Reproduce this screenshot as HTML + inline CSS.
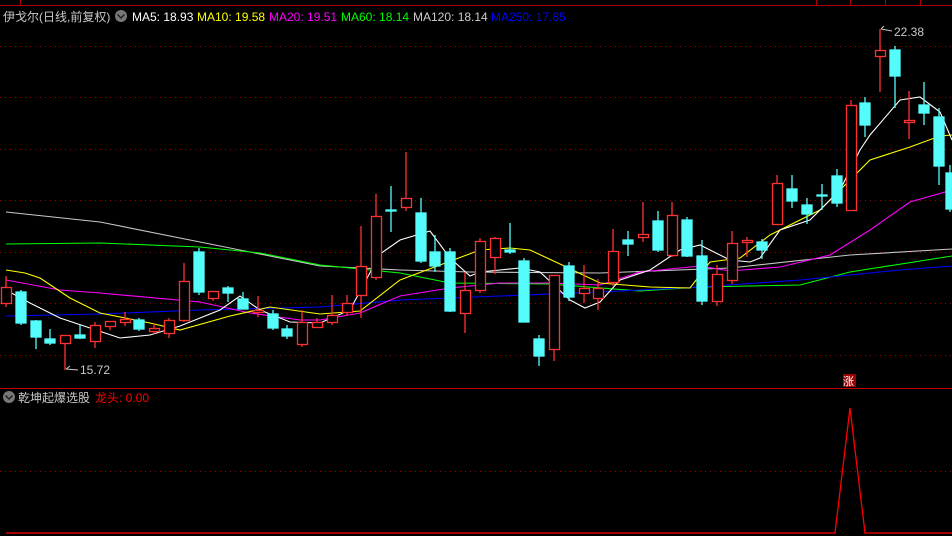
<!DOCTYPE html>
<html><head><meta charset="utf-8"><style>
html,body{margin:0;padding:0;background:#000;width:952px;height:536px;overflow:hidden}
svg{display:block}
text{font-family:"Liberation Sans","Noto Sans CJK SC",sans-serif;font-size:12px}
</style></head><body>
<svg width="952" height="536" viewBox="0 0 952 536" xmlns="http://www.w3.org/2000/svg">
<rect width="952" height="536" fill="#000"/>
<line x1="0" y1="5.5" x2="952" y2="5.5" stroke="#b00000"/>
<line x1="20.5" y1="0" x2="20.5" y2="5" stroke="#b00000"/>
<g stroke="#b00000"><line x1="816.5" y1="0" x2="816.5" y2="5"/><line x1="850.5" y1="0" x2="850.5" y2="5"/><line x1="885.5" y1="0" x2="885.5" y2="5"/><line x1="920.5" y1="0" x2="920.5" y2="5"/></g>
<g stroke="#900" stroke-dasharray="1 4">
<line x1="0" y1="46.5" x2="952" y2="46.5"/><line x1="0" y1="97.5" x2="952" y2="97.5"/><line x1="0" y1="149.5" x2="952" y2="149.5"/><line x1="0" y1="200.5" x2="952" y2="200.5"/><line x1="0" y1="252.5" x2="952" y2="252.5"/><line x1="0" y1="303.5" x2="952" y2="303.5"/><line x1="0" y1="355.5" x2="952" y2="355.5"/><line x1="0" y1="471.5" x2="952" y2="471.5"/>
</g>
<line x1="0" y1="388.5" x2="952" y2="388.5" stroke="#c00000"/>
<text x="3" y="21" fill="#c8c8c8">伊戈尔(日线,前复权)</text>
<circle cx="121" cy="16" r="6" fill="#777"/><path d="M117.5 14.5 L121 18 L124.5 14.5" stroke="#222" stroke-width="1.5" fill="none"/>
<text x="132" y="21" fill="#fff">MA5: 18.93</text>
<text x="197" y="21" fill="#ff0">MA10: 19.58</text>
<text x="269" y="21" fill="#f0f">MA20: 19.51</text>
<text x="341" y="21" fill="#0f0">MA60: 18.14</text>
<text x="413" y="21" fill="#ccc">MA120: 18.14</text>
<text x="491" y="21" fill="#00f">MA250: 17.85</text>
<g fill="none" stroke-width="1.1">
<polyline stroke="#c8c8c8" points="6,212 100,222 200,242 320,266 400,270 470,272 600,273 730,268 850,255 952,249"/>
<polyline stroke="#0f0" points="6,244 100,243 200,247 260,253 320,265 400,273 450,283 550,284 640,291 700,287 800,285 850,272 952,256"/>
<polyline stroke="#00f" points="6,316 100,314 200,310 320,307 400,300 500,296 600,292 700,287 800,280 900,270 952,266"/>
<polyline stroke="#f0f" points="6,280 60,290 100,293 200,302 250,313 300,320 320,320 360,313 400,296 450,288 500,283 550,283 600,285 640,272 700,266 730,271 780,267 830,255 870,230 910,202 952,190"/>
<polyline stroke="#ff0" points="6,270 25,273 40,278 70,298 100,313 150,323 180,330 230,316 270,307 320,314 360,311 400,280 440,265 480,250 510,248 530,250 560,264 600,283 650,287 690,288 710,262 740,258 770,235 820,210 870,160 910,147 940,136 952,135"/>
<polyline stroke="#fff" points="6,290 30,303 60,318 90,328 120,338 150,335 180,326 220,310 240,296 260,310 290,322 320,323 350,310 380,254 400,240 430,231 450,258 470,276 480,272 500,270 520,268 540,272 570,300 585,308 600,302 620,280 650,270 680,250 700,245 730,260 750,262 760,258 780,230 810,220 840,190 860,150 870,135 900,100 920,97 940,112 952,140"/>
</g>
<g stroke="#ff3232" fill="#000" stroke-width="1.3">
<line x1="6" y1="276" x2="6" y2="307"/><rect x="1.5" y="287.5" width="10" height="16"/>
<line x1="65" y1="335" x2="65" y2="370"/><rect x="60.5" y="335.5" width="10" height="8"/>
<line x1="95" y1="322" x2="95" y2="348"/><rect x="90.5" y="325.5" width="10" height="16"/>
<line x1="110" y1="321" x2="110" y2="330"/><rect x="105.5" y="321.5" width="10" height="5"/>
<line x1="125" y1="312" x2="125" y2="326"/><rect x="120.5" y="319.5" width="10" height="3"/>
<line x1="154" y1="323" x2="154" y2="334"/><rect x="149.5" y="328.5" width="10" height="3"/>
<line x1="169" y1="318" x2="169" y2="338"/><rect x="164.5" y="320.5" width="10" height="13"/>
<line x1="184" y1="263" x2="184" y2="322"/><rect x="179.5" y="281.5" width="10" height="39"/>
<line x1="213" y1="291" x2="213" y2="301"/><rect x="208.5" y="291.5" width="10" height="7"/>
<line x1="258" y1="296" x2="258" y2="317"/><rect x="253.5" y="310.5" width="10" height="2"/>
<line x1="302" y1="310" x2="302" y2="347"/><rect x="297.5" y="322.5" width="10" height="22"/>
<line x1="317" y1="318" x2="317" y2="328"/><rect x="312.5" y="322.5" width="10" height="5"/>
<line x1="332" y1="295" x2="332" y2="325"/><rect x="327.5" y="315.5" width="10" height="7"/>
<line x1="347" y1="295" x2="347" y2="316"/><rect x="342.5" y="303.5" width="10" height="9"/>
<line x1="361" y1="226" x2="361" y2="318"/><rect x="356.5" y="266.5" width="10" height="29"/>
<line x1="376" y1="194" x2="376" y2="280"/><rect x="371.5" y="216.5" width="10" height="61"/>
<line x1="406" y1="152" x2="406" y2="211"/><rect x="401.5" y="198.5" width="10" height="9"/>
<line x1="465" y1="272" x2="465" y2="333"/><rect x="460.5" y="290.5" width="10" height="23"/>
<line x1="480" y1="238" x2="480" y2="293"/><rect x="475.5" y="241.5" width="10" height="49"/>
<line x1="495" y1="237" x2="495" y2="274"/><rect x="490.5" y="238.5" width="10" height="19"/>
<line x1="554" y1="275" x2="554" y2="361"/><rect x="549.5" y="275.5" width="10" height="74"/>
<line x1="584" y1="265" x2="584" y2="303"/><rect x="579.5" y="288.5" width="10" height="5"/>
<line x1="598" y1="279" x2="598" y2="310"/><rect x="593.5" y="288.5" width="10" height="10"/>
<line x1="613" y1="229" x2="613" y2="286"/><rect x="608.5" y="251.5" width="10" height="31"/>
<line x1="643" y1="202" x2="643" y2="242"/><rect x="638.5" y="234.5" width="10" height="3"/>
<line x1="672" y1="202" x2="672" y2="257"/><rect x="667.5" y="215.5" width="10" height="40"/>
<line x1="717" y1="265" x2="717" y2="306"/><rect x="712.5" y="274.5" width="10" height="27"/>
<line x1="732" y1="231" x2="732" y2="284"/><rect x="727.5" y="243.5" width="10" height="37"/>
<line x1="747" y1="237" x2="747" y2="257"/><rect x="742.5" y="240.5" width="10" height="2"/>
<line x1="777" y1="175" x2="777" y2="224"/><rect x="772.5" y="183.5" width="10" height="41"/>
<line x1="851" y1="100" x2="851" y2="210"/><rect x="846.5" y="105.5" width="10" height="105"/>
<line x1="880" y1="29" x2="880" y2="92"/><rect x="875.5" y="50.5" width="10" height="6"/>
<line x1="909" y1="91" x2="909" y2="139"/><rect x="904.5" y="120.5" width="10" height="2"/>
</g>
<g stroke="#54fcfc" fill="#54fcfc" stroke-width="1.3">
<line x1="21" y1="290" x2="21" y2="325"/><rect x="16" y="292" width="10" height="31"/>
<line x1="36" y1="320" x2="36" y2="349"/><rect x="31" y="321" width="10" height="16"/>
<line x1="50" y1="329" x2="50" y2="345"/><rect x="45" y="339" width="10" height="4"/>
<line x1="80" y1="325" x2="80" y2="339"/><rect x="75" y="335" width="10" height="3"/>
<line x1="139" y1="318" x2="139" y2="331"/><rect x="134" y="320" width="10" height="9"/>
<line x1="199" y1="248" x2="199" y2="295"/><rect x="194" y="252" width="10" height="40"/>
<line x1="228" y1="286" x2="228" y2="302"/><rect x="223" y="288" width="10" height="5"/>
<line x1="243" y1="292" x2="243" y2="309"/><rect x="238" y="299" width="10" height="10"/>
<line x1="273" y1="310" x2="273" y2="330"/><rect x="268" y="314" width="10" height="14"/>
<line x1="287" y1="325" x2="287" y2="339"/><rect x="282" y="329" width="10" height="7"/>
<line x1="391" y1="186" x2="391" y2="232"/><rect x="386" y="210" width="10" height="1"/>
<line x1="421" y1="198" x2="421" y2="263"/><rect x="416" y="213" width="10" height="48"/>
<line x1="435" y1="235" x2="435" y2="272"/><rect x="430" y="252" width="10" height="14"/>
<line x1="450" y1="248" x2="450" y2="312"/><rect x="445" y="252" width="10" height="59"/>
<line x1="510" y1="223" x2="510" y2="254"/><rect x="505" y="250" width="10" height="2"/>
<line x1="524" y1="258" x2="524" y2="322"/><rect x="519" y="261" width="10" height="61"/>
<line x1="539" y1="335" x2="539" y2="366"/><rect x="534" y="339" width="10" height="17"/>
<line x1="569" y1="262" x2="569" y2="301"/><rect x="564" y="266" width="10" height="31"/>
<line x1="628" y1="231" x2="628" y2="256"/><rect x="623" y="240" width="10" height="4"/>
<line x1="658" y1="211" x2="658" y2="252"/><rect x="653" y="221" width="10" height="29"/>
<line x1="687" y1="217" x2="687" y2="257"/><rect x="682" y="220" width="10" height="36"/>
<line x1="702" y1="240" x2="702" y2="305"/><rect x="697" y="256" width="10" height="45"/>
<line x1="762" y1="239" x2="762" y2="259"/><rect x="757" y="242" width="10" height="8"/>
<line x1="792" y1="175" x2="792" y2="208"/><rect x="787" y="189" width="10" height="12"/>
<line x1="807" y1="198" x2="807" y2="224"/><rect x="802" y="205" width="10" height="9"/>
<line x1="822" y1="184" x2="822" y2="210"/><rect x="817" y="195" width="10" height="1"/>
<line x1="837" y1="169" x2="837" y2="207"/><rect x="832" y="176" width="10" height="27"/>
<line x1="865" y1="97" x2="865" y2="137"/><rect x="860" y="103" width="10" height="22"/>
<line x1="895" y1="46" x2="895" y2="108"/><rect x="890" y="50" width="10" height="26"/>
<line x1="924" y1="82" x2="924" y2="125"/><rect x="919" y="105" width="10" height="8"/>
<line x1="939" y1="108" x2="939" y2="185"/><rect x="934" y="117" width="10" height="49"/>
<line x1="950" y1="165" x2="950" y2="212"/><rect x="946" y="173" width="8" height="36"/>
</g>
<path d="M66 369 L70 366 M66 369 L78 370" stroke="#c8c8c8" fill="none"/>
<text x="80" y="374" fill="#c8c8c8">15.72</text>
<path d="M881 29 L884 26 M881 29 L892 31" stroke="#c8c8c8" fill="none"/>
<text x="894" y="36" fill="#c8c8c8">22.38</text>
<rect x="843" y="374" width="13" height="13" fill="#900"/>
<text x="843" y="385" fill="#fff" style="font-size:11px">涨</text>
<circle cx="9" cy="397" r="6" fill="#777"/><path d="M5.5 395.5 L9 399 L12.5 395.5" stroke="#222" stroke-width="1.5" fill="none"/>
<text x="18" y="402" fill="#c8c8c8">乾坤起爆选股</text>
<text x="95" y="402" fill="#f00">龙头: 0.00</text>
<polyline points="6,533 835,533 850,408 865,533 952,533" fill="none" stroke="#f00" stroke-width="1.3"/>
</svg>
</body></html>
